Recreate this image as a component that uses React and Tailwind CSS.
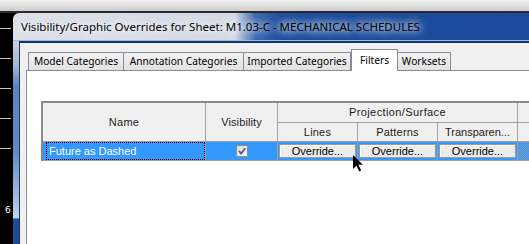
export default function App() {
  const ticks = [0, 1, 2, 3, 4];
  return (
    <div className="relative w-[529px] h-[244px] overflow-hidden flex flex-col bg-black">
      <div className="h-[11px] shrink-0 bg-gradient-to-b from-[#f0f0f0] to-[#cdcdcd]" />
      <div className="h-[2px] shrink-0 bg-[#2b2b2b]" />
      <div className="flex flex-1 min-h-0">
        {/* background behind the dialog */}
        <div className="w-[13px] shrink-0 flex flex-col">
          <div className="flex flex-col pt-[15px] gap-[29px]">
            {ticks.map((i) => (
              <div key={i} className="h-px w-[11px] bg-[#c8c8c8]" />
            ))}
          </div>
          <div className="mt-[56px] pl-[5px] text-[9px] leading-[10px] text-white font-['DejaVu_Sans',sans-serif]">6</div>
        </div>

        {/* dialog */}
        <div className="flex-1 min-w-0 flex flex-col rounded-tl-[6px] overflow-hidden">
          <div className="h-[28px] shrink-0 flex items-center pl-[8px] border-b border-[#9db8e2] bg-[linear-gradient(90deg,#dce1e8_0%,#d4dbe5_43%,#3a67b0_47%,#1c4c9d_52%,#1b4a9a_100%)]">
            <span className="whitespace-nowrap text-[11.5px] leading-[14px] text-black font-['Noto_Sans',sans-serif] [text-shadow:0_0_6px_rgba(255,255,255,0.95),0_0_10px_rgba(255,255,255,0.8),0_0_14px_rgba(255,255,255,0.6)]">
              Visibility/Graphic Overrides for Sheet: M1.03-C - MECHANICAL SCHEDULES
            </span>
          </div>
          <div className="flex flex-1 min-h-0">
            <div className="w-[6px] shrink-0 bg-[linear-gradient(180deg,#c9d0da_0px,#a3b6d1_25px,#5e83bb_45px,#6489c0_110px,#b7c9e5_170px,#c8d6eb_177px,#1c4a94_178px,#1c4a94_100%)]" />
            <div className="flex-1 min-w-0 flex flex-col bg-[#f0f0f0] border-t-2 border-l border-[#15346c]">
              {/* tabs */}
              <div className="h-[27px] shrink-0 flex items-end pl-[8px] font-['Noto_Sans',sans-serif] text-[10.2px] text-black">
                <div className="w-[95px] h-[18px] border-l border-t border-[#898c95] bg-gradient-to-b from-[#f3f3f3] to-[#e1e1e1] flex items-center justify-center whitespace-nowrap">
                  Model Categories
                </div>
                <div className="w-[120px] h-[18px] border-l border-t border-[#898c95] bg-gradient-to-b from-[#f3f3f3] to-[#e1e1e1] flex items-center justify-center whitespace-nowrap">
                  Annotation Categories
                </div>
                <div className="w-[108px] h-[18px] border-l border-t border-r border-[#898c95] bg-gradient-to-b from-[#f3f3f3] to-[#e1e1e1] flex items-center justify-center whitespace-nowrap">
                  Imported Categories
                </div>
                <div className="relative top-[1px] z-10 w-[47px] h-[22px] border-l border-t border-r border-[#898c95] bg-white flex items-center justify-center whitespace-nowrap">
                  Filters
                </div>
                <div className="w-[53px] h-[18px] border-t border-r border-[#898c95] bg-gradient-to-b from-[#f3f3f3] to-[#e1e1e1] flex items-center justify-center whitespace-nowrap">
                  Worksets
                </div>
              </div>

              {/* tab panel */}
              <div className="flex-1 ml-[6px] bg-white border-t border-l border-[#898c95] font-['Liberation_Sans',Arial,sans-serif] text-[11px] leading-[13px] text-[#1a1a1a]">
                <div className="mt-[30px] ml-[14px] w-[600px] border-t-2 border-l-2 border-[#8a8a8a] flex flex-col">
                  {/* header */}
                  <div className="flex h-[39px]">
                    <div className="w-[163px] shrink-0 border-r border-b border-[#a0a0a0] bg-[#f0f0f0] flex items-center justify-center tracking-[0.3px]">
                      Name
                    </div>
                    <div className="w-[72px] shrink-0 border-r border-b border-[#a0a0a0] bg-[#f0f0f0] flex items-center justify-center tracking-[0.1px]">
                      Visibility
                    </div>
                    <div className="w-[240px] shrink-0 flex flex-col">
                      <div className="h-[20px] border-r border-b border-[#a0a0a0] bg-[#f0f0f0] flex items-center justify-center tracking-[0.4px]">
                        Projection/Surface
                      </div>
                      <div className="h-[19px] flex">
                        <div className="w-[80px] border-r border-b border-[#a0a0a0] bg-[#f0f0f0] flex items-center justify-center tracking-[0.2px]">Lines</div>
                        <div className="w-[80px] border-r border-b border-[#a0a0a0] bg-[#f0f0f0] flex items-center justify-center tracking-[0.2px]">Patterns</div>
                        <div className="w-[80px] border-r border-b border-[#a0a0a0] bg-[#f0f0f0] flex items-center justify-center whitespace-nowrap">Transparen...</div>
                      </div>
                    </div>
                    <div className="w-[100px] shrink-0 flex flex-col">
                      <div className="h-[20px] border-b border-[#a0a0a0] bg-[#f0f0f0]" />
                      <div className="h-[19px] border-b border-[#a0a0a0] bg-[#f0f0f0]" />
                    </div>
                  </div>

                  {/* data row */}
                  <div className="flex h-[19px]">
                    <div className="w-[163px] shrink-0 border-r border-b border-[#a0a0a0] bg-[#3399ff] pl-[3px]">
                      <div className="h-full border border-dotted border-black flex items-center pl-[2px] text-white whitespace-nowrap">
                        Future as Dashed
                      </div>
                    </div>
                    <div className="w-[72px] shrink-0 border-r border-b border-[#a0a0a0] bg-[#3399ff] flex items-center justify-center">
                      <div className="w-[12px] h-[12px] border border-[#8e8f8f] bg-gradient-to-br from-[#dadada] to-[#f7f7f7] flex items-center justify-center">
                        <svg width="10" height="10" viewBox="0 0 10 10">
                          <polyline points="2,5 4.2,7.6 8.2,2.2" fill="none" stroke="#4a5c93" strokeWidth="1.8" />
                        </svg>
                      </div>
                    </div>
                    {[0, 1, 2].map((i) => (
                      <div key={i} className="w-[80px] shrink-0 border-r border-b border-[#a0a0a0] bg-[#3399ff] px-[1px] pt-[2px]">
                        <div className="h-[14px] w-full bg-[#ececec] border border-[#9a9a9a] shadow-[inset_1px_1px_0_#ffffff] flex items-center justify-center text-black leading-[12px]">
                          Override...
                        </div>
                      </div>
                    ))}
                    <div className="w-[100px] shrink-0 border-b border-[#a0a0a0] bg-[repeating-conic-gradient(#3399ff_0_25%,#7d97b8_0_50%)] bg-[length:2px_2px]" />
                  </div>
                </div>
              </div>
            </div>
          </div>
        </div>
      </div>

      {/* mouse cursor */}
      <svg className="absolute left-[353px] top-[155px]" width="11" height="17" viewBox="0 0 11 17">
        <polygon points="0,0 0,14 3.5,10.7 6.2,16.5 8.2,15.6 5.4,9.8 9.8,9.8" fill="#000" />
      </svg>
    </div>
  );
}
